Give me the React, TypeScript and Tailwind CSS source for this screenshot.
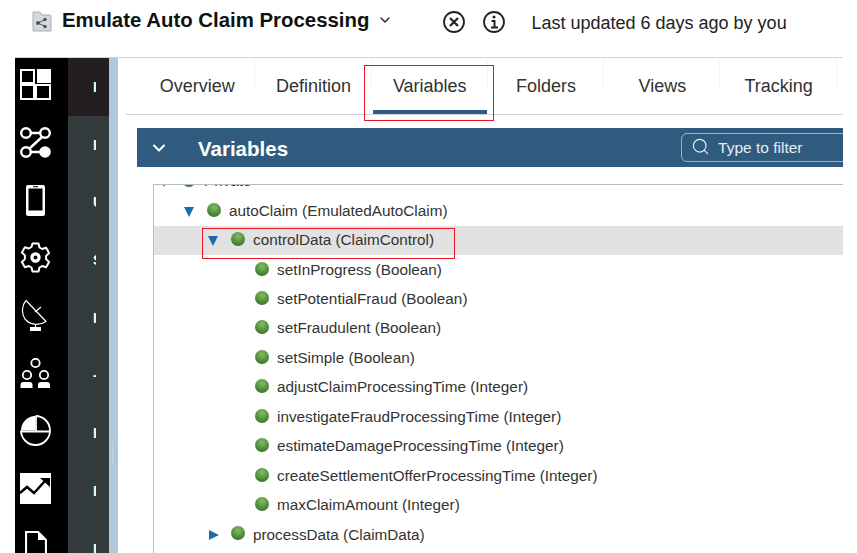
import { ChevronDown, Search } from "lucide-react";

const TABS = ["Overview", "Definition", "Variables", "Folders", "Views", "Tracking"];

const LEAVES = [
  "setInProgress (Boolean)",
  "setPotentialFraud (Boolean)",
  "setFraudulent (Boolean)",
  "setSimple (Boolean)",
  "adjustClaimProcessingTime (Integer)",
  "investigateFraudProcessingTime (Integer)",
  "estimateDamageProcessingTime (Integer)",
  "createSettlementOfferProcessingTime (Integer)",
  "maxClaimAmount (Integer)",
];

function GridIcon() {
  return (
    <svg width="31" height="31" viewBox="0 0 31 31" fill="none" stroke="white" strokeWidth="2">
      <rect x="1" y="1" width="13" height="13" />
      <rect x="1" y="16" width="13" height="14" />
      <rect x="16" y="16" width="14" height="14" />
      <rect x="17" y="0" width="14" height="14" fill="white" stroke="none" />
    </svg>
  );
}

function NodesIcon() {
  return (
    <svg width="31" height="31" viewBox="0 0 31 31" fill="none" stroke="white" strokeWidth="2.400">
      <circle cx="6" cy="6" r="4.800" />
      <circle cx="25" cy="6" r="4.800" />
      <circle cx="6" cy="25" r="4.800" />
      <circle cx="25" cy="25" r="5.800" fill="white" stroke="none" />
      <path d="M11 6h9M22 10 9.500 21.500M11 25h9" />
    </svg>
  );
}

function PhoneIcon() {
  return (
    <svg width="19" height="31" viewBox="0 0 19 31" fill="none">
      <path d="M2 0h15a2 2 0 0 1 2 2v27a2 2 0 0 1-2 2H2a2 2 0 0 1-2-2V2a2 2 0 0 1 2-2z" fill="white" />
      <rect x="2.500" y="3.500" width="14" height="22" fill="black" />
      <rect x="7" y="1.200" width="5" height="1" fill="black" />
    </svg>
  );
}

function GearIcon() {
  return (
    <svg width="31" height="31" viewBox="0 0 31 31" fill="none" stroke="white" strokeWidth="2" strokeLinejoin="round">
      <path d="M12.500 1.500h6l1 4 2.600 1.500 4-1.200 3 5.200-3 2.900v3.200l3 2.900-3 5.200-4-1.200-2.600 1.500-1 4h-6l-1-4-2.600-1.500-4 1.200-3-5.200 3-2.900V13.400l-3-2.900 3-5.200 4 1.200 2.600-1.500z" />
      <circle cx="15.500" cy="15.500" r="3.600" strokeWidth="3.200" />
    </svg>
  );
}

function DishIcon() {
  return (
    <svg width="31" height="31" viewBox="0 0 31 31" fill="none" stroke="white" strokeWidth="1.200">
      <path d="M6 0.500 26 21.500C19 26 10 25 5 19 1 13 2 5 6 0.500z" />
      <path d="M15 12l6-5" />
      <rect x="10" y="27" width="11" height="4" fill="white" stroke="none" />
      <path d="M15.500 24v3" />
    </svg>
  );
}

function TeamIcon() {
  return (
    <svg width="31" height="31" viewBox="0 0 31 31" fill="none" stroke="white" strokeWidth="1.800">
      <circle cx="15.500" cy="5" r="4.200" />
      <circle cx="7" cy="17" r="4.200" />
      <circle cx="24" cy="17" r="4.200" />
      <path d="M0.500 30v-3q0-3 3-3h6q3 0 3 3v3zM18 30v-3q0-3 3-3h6q3 0 3 3v3z" fill="white" stroke="none" />
    </svg>
  );
}

function PieIcon() {
  return (
    <svg width="31" height="31" viewBox="0 0 31 31" fill="none" stroke="white" strokeWidth="1.800">
      <path d="M15 15.500V1A14.500 14.500 0 0 0 1 15.500z" fill="white" stroke="none" />
      <path d="M15.500 1A14.500 14.500 0 1 1 1 15.500" />
      <path d="M1 16.500h29M16 1v15.500" />
    </svg>
  );
}

function TrendIcon() {
  return (
    <svg width="31" height="31" viewBox="0 0 31 31">
      <rect width="31" height="31" fill="white" />
      <path d="M0 20l7-6 7 6L25 8" fill="none" stroke="black" strokeWidth="2.500" />
      <path d="M20 5h10v9z" fill="black" />
    </svg>
  );
}

function FileIcon() {
  return (
    <svg width="22" height="31" viewBox="0 0 22 31" fill="none" stroke="white" strokeWidth="2.200">
      <path d="M1 1h12l8 8v21H1z" />
      <path d="M13 0l9 9h-9z" fill="white" stroke="none" />
    </svg>
  );
}

const NAV = [
  { icon: <GridIcon />, label: "I", h: "h-[58px]", bg: "bg-[#231f20]" },
  { icon: <NodesIcon />, label: "I", h: "h-[58px]", bg: "bg-[#323a3c]" },
  { icon: <PhoneIcon />, label: "U", h: "h-[57px]", bg: "bg-[#323a3c]" },
  { icon: <GearIcon />, label: "S", h: "h-[58px]", bg: "bg-[#323a3c]" },
  { icon: <DishIcon />, label: "I", h: "h-[58px]", bg: "bg-[#323a3c]" },
  { icon: <TeamIcon />, label: "-", h: "h-[57px]", bg: "bg-[#323a3c]" },
  { icon: <PieIcon />, label: "I", h: "h-[58px]", bg: "bg-[#323a3c]" },
  { icon: <TrendIcon />, label: "I", h: "h-[58px]", bg: "bg-[#323a3c]" },
  { icon: <FileIcon />, label: "I", h: "h-[58px]", bg: "bg-[#323a3c]" },
];

function Bullet() {
  return (
    <span className="-mt-[3px] block h-[14px] w-[14px] shrink-0 rounded-full bg-[radial-gradient(circle_at_50%_30%,#86bb62,#4f8f3c_55%,#2c5a26)]" />
  );
}

function TreeRow({
  text,
  indent,
  arrow,
  selected,
}: {
  text: string;
  indent: string;
  arrow?: "down" | "right";
  selected?: boolean;
}) {
  return (
    <div className={`flex h-[29.450px] items-center ${indent} ${selected ? "bg-[#e2e2e2]" : ""}`}>
      <span className="flex w-[24px] shrink-0 items-center">
        {arrow === "down" && <span className="ml-[1px] mt-[1px] h-0 w-0 border-x-[5px] border-t-[10px] border-x-transparent border-t-[#1b6ca8]" />}
        {arrow === "right" && <span className="ml-[2px] h-0 w-0 border-y-[5px] border-l-[10px] border-y-transparent border-l-[#1b6ca8]" />}
      </span>
      <Bullet />
      <span className="ml-[8px] whitespace-nowrap text-[15.300px] text-[#333]">{text}</span>
    </div>
  );
}

export default function App() {
  return (
    <div className="relative flex h-[553px] w-[857px] flex-col overflow-hidden bg-white font-['Liberation_Sans',Arial,sans-serif]">
      {/* Header */}
      <header className="flex h-[57px] shrink-0 items-start pl-[32px] pt-[8px]">
        <svg width="20" height="21" viewBox="0 0 20 21" className="mt-[3px]">
          <path d="M1 1h7l2 3h8a1 1 0 0 1 1 1v15H1z" fill="#d6d8da" stroke="#a9adb0" />
          <circle cx="6" cy="12" r="2" fill="#3f5566" />
          <circle cx="13" cy="8.500" r="1.700" fill="#3f5566" />
          <circle cx="13" cy="15.500" r="1.700" fill="#3f5566" />
          <path d="M6 12l7-3.500M6 12l7 3.500" stroke="#3f5566" strokeWidth="1" />
        </svg>
        <h1 className="ml-[10px] whitespace-nowrap text-[20.400px] font-bold leading-[24px] text-[#111]">
          Emulate Auto Claim Processing
        </h1>
        <ChevronDown className="ml-[8px] mt-[4px] text-[#222]" size={16} strokeWidth={2} />
        <svg width="24" height="24" viewBox="0 0 24 24" fill="none" stroke="#222" strokeWidth="1.800" className="ml-[49px] mt-[2px]">
          <circle cx="12" cy="12" r="10" />
          <path d="M8 8l8 8M16 8l-8 8" strokeWidth="2.200" />
        </svg>
        <svg width="24" height="24" viewBox="0 0 24 24" fill="none" stroke="#222" strokeWidth="1.800" className="ml-[16px] mt-[2px]">
          <circle cx="12" cy="12" r="10" />
          <circle cx="12" cy="7" r="1.500" fill="#222" stroke="none" />
          <path d="M9.500 11H12.500V17M9 17.500h7" strokeWidth="2" />
        </svg>
        <span className="ml-[25px] mt-[4px] whitespace-nowrap text-[18px] leading-[22px] text-[#222]">
          Last updated 6 days ago by you
        </span>
      </header>

      {/* Body */}
      <div className="ml-[15px] mr-[14px] flex min-h-0 flex-1 border-t border-[#cfd3d6]">
        {/* Icon rail */}
        <nav className="flex w-[94px] shrink-0 flex-col">
          {NAV.map((item, i) => (
            <div key={i} className={`flex shrink-0 ${item.h}`}>
              <div className="flex w-[53px] items-center justify-center bg-black pb-[5px] pr-[12px]">{item.icon}</div>
              <div className={`flex w-[41px] items-center overflow-hidden pl-[25px] text-[14px] font-bold text-white ${item.bg}`}>
                <span className="block w-[3px] overflow-hidden">{item.label}</span>
              </div>
            </div>
          ))}
        </nav>
        <div className="relative w-[9px] shrink-0 bg-[#b0c8da]">
          <span className="absolute left-[3px] top-[383px] h-[23px] w-[1px] bg-[#c7d3dc]" />
        </div>

        {/* Main */}
        <main className="flex min-w-0 flex-1 flex-col">
          <div className="ml-[8px] flex h-[57px] shrink-0 border-b border-[#cdd5dc] pl-[13px]">
            {TABS.map((tab) => (
              <div key={tab} className="relative flex w-[116.300px] shrink-0 items-start justify-center pt-[17px]">
                <span className="absolute bottom-[26px] right-0 top-[2px] w-[1px] bg-[#f1f2f3]" />
                <span className="text-[18px] leading-[22px] text-[#323232]">{tab}</span>
                {tab === "Variables" && <span className="absolute bottom-0 left-[1px] right-[1px] h-[4px] bg-[#315b7e]" />}
              </div>
            ))}
          </div>

          <div className="ml-[19px] mt-[13px] flex h-[39px] shrink-0 items-center overflow-hidden bg-[#315b7e] text-white">
            <ChevronDown className="ml-[12px] shrink-0" size={20} strokeWidth={2.500} />
            <span className="ml-[29px] mt-[3px] text-[20.500px] font-bold">Variables</span>
            <div className="ml-[393px] flex h-[29px] w-[200px] shrink-0 items-center rounded-[6px] border border-[#9db3c6] pl-[9px]">
              <Search size={19} strokeWidth={1.500} className="-mt-[3px] text-[#e6edf3]" />
              <span className="ml-[8px] text-[15.500px] text-[#e6edf3]">Type to filter</span>
            </div>
          </div>

          <div className="ml-[35px] mt-[17px] min-h-0 flex-1 overflow-hidden border-l border-t border-[#b4bcc8]">
            <div className="-mt-[18px]">
              <TreeRow text="Private" indent="pl-[4px]" arrow="down" />
              <TreeRow text="autoClaim (EmulatedAutoClaim)" indent="pl-[29px]" arrow="down" />
              <TreeRow text="controlData (ClaimControl)" indent="pl-[53px]" arrow="down" selected />
              {LEAVES.map((leaf) => (
                <TreeRow key={leaf} text={leaf} indent="pl-[77px]" />
              ))}
              <TreeRow text="processData (ClaimData)" indent="pl-[53px]" arrow="right" />
            </div>
          </div>
        </main>
      </div>

      {/* Red annotation boxes */}
      <span className="absolute left-[364px] top-[65px] h-[56px] w-[130px] border border-[#e8171f]" />
      <span className="absolute left-[202px] top-[228px] h-[31px] w-[253px] border border-[#e8171f]" />
    </div>
  );
}
